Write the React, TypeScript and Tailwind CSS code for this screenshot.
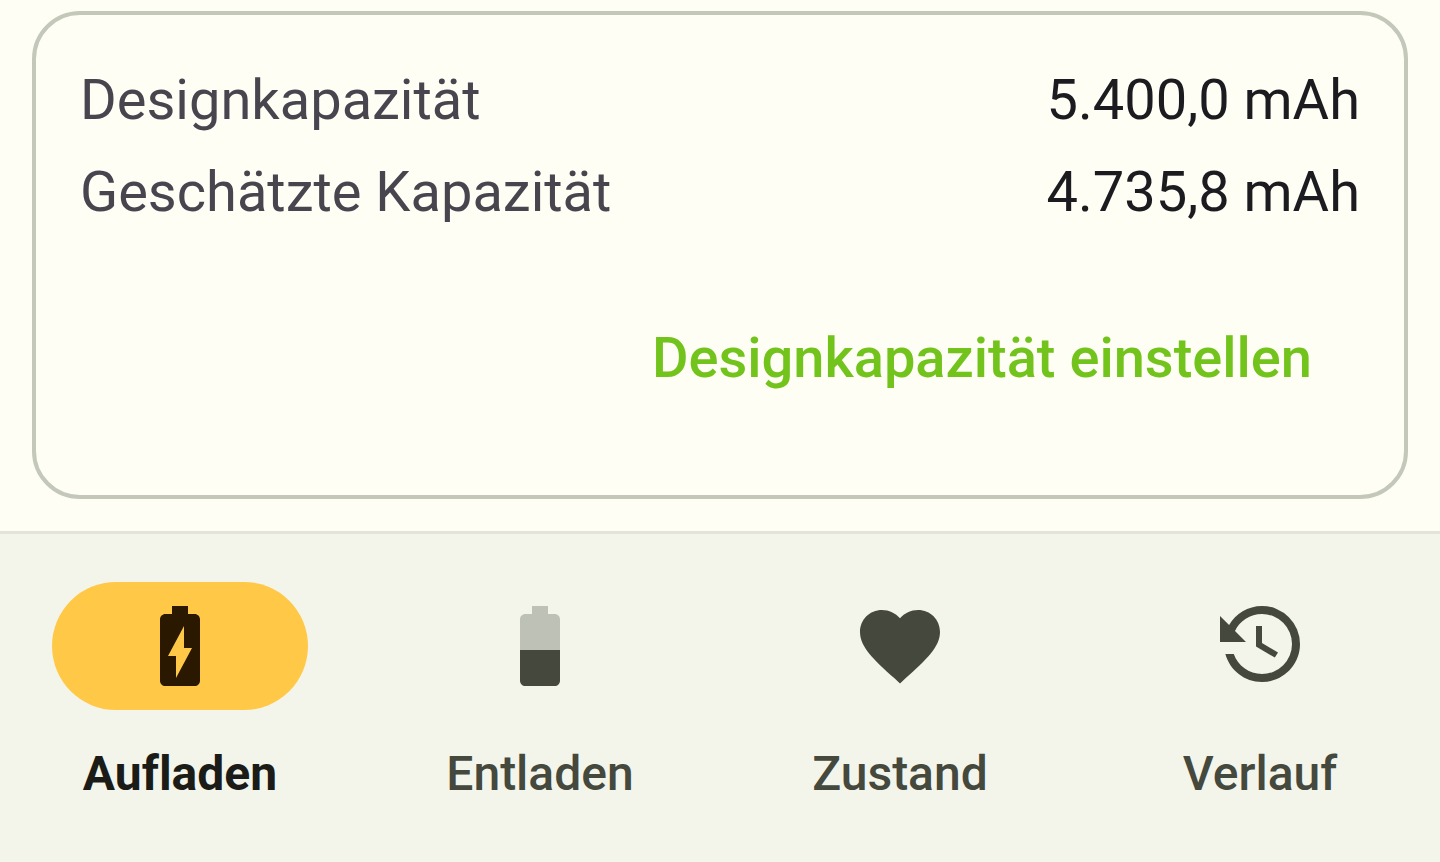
import type { ReactNode } from "react";

const capacities = [
  { label: "Designkapazität", value: "5.400,0 mAh" },
  { label: "Geschätzte Kapazität", value: "4.735,8 mAh" },
];

function Icon({ children }: { children: ReactNode }) {
  return (
    <svg viewBox="0 0 24 24" className="size-24" fill="currentColor" aria-hidden="true">
      {children}
    </svg>
  );
}

const tabs = [
  {
    label: "Aufladen",
    active: true,
    icon: (
      <path d="M15.67 4H14V2h-4v2H8.33C7.6 4 7 4.6 7 5.33v15.33C7 21.4 7.6 22 8.33 22h7.33c.74 0 1.34-.6 1.34-1.33V5.33C17 4.6 16.4 4 15.67 4zM11 20v-5.5H9L13 7v5.5h2L11 20z" />
    ),
  },
  {
    label: "Entladen",
    active: false,
    icon: (
      <>
        <path fillOpacity=".3" d="M17 5.33C17 4.6 16.4 4 15.67 4H14V2h-4v2H8.33C7.6 4 7 4.6 7 5.33V13h10V5.33z" />
        <path d="M7 13v7.67C7 21.4 7.6 22 8.33 22h7.33c.74 0 1.34-.6 1.34-1.33V13H7z" />
      </>
    ),
  },
  {
    label: "Zustand",
    active: false,
    icon: (
      <path d="M12 21.35L10.55 20.03C5.4 15.36 2 12.27 2 8.5C2 5.41 4.42 3 7.5 3C9.24 3 10.91 3.81 12 5.08C13.09 3.81 14.76 3 16.5 3C19.58 3 22 5.41 22 8.5C22 12.27 18.6 15.36 13.45 20.03L12 21.35Z" />
    ),
  },
  {
    label: "Verlauf",
    active: false,
    icon: (
      <path d="M11 7V12.11L15.71 14.9L16.5 13.62L12.5 11.25V7M12.5 2C8.97 2 5.91 3.92 4.27 6.77L2 4.5V11H8.5L5.75 8.25C6.96 5.73 9.5 4 12.5 4A7.5 7.5 0 0 1 20 11.5A7.5 7.5 0 0 1 12.5 19C9.23 19 6.47 16.91 5.44 14H3.34C4.44 18.03 8.11 21 12.5 21C17.74 21 22 16.75 22 11.5A9.5 9.5 0 0 0 12.5 2Z" />
    ),
  },
];

export default function App() {
  return (
    <div className="flex min-h-screen flex-col bg-[#fefef5] font-['Roboto',sans-serif]">
      <main className="grow px-8 pt-[11px] pb-8">
        <section className="flex flex-col rounded-[48px] border-4 border-[#c4c8ba] px-11 pt-[45px] pb-[57px]">
          <dl className="flex flex-col gap-3 text-[56px] leading-20">
            {capacities.map((row) => (
              <div key={row.label} className="flex justify-between gap-8">
                <dt className="text-[#49454f]">{row.label}</dt>
                <dd className="text-[#1c1b1f]">{row.value}</dd>
              </div>
            ))}
          </dl>
          <button
            type="button"
            className="mt-[46px] cursor-pointer self-end rounded-full px-12 py-10 text-[56px] leading-20 font-medium text-[#72c41c]"
          >
            Designkapazität einstellen
          </button>
        </section>
      </main>
      <nav className="grid grid-cols-4 border-t-3 border-[#e3e3dc] bg-[#f3f5eb] pt-12 pb-14 [font-variant-ligatures:none]">
        {tabs.map((tab) => (
          <a
            key={tab.label}
            href={`#${tab.label.toLowerCase()}`}
            aria-current={tab.active ? "page" : undefined}
            className="flex flex-col items-center gap-8"
          >
            <span
              className={
                tab.active
                  ? "flex h-32 w-64 items-center justify-center rounded-full bg-[#ffc947] text-[#2a1800]"
                  : "flex h-32 w-64 items-center justify-center rounded-full text-[#45483d]"
              }
            >
              <Icon>{tab.icon}</Icon>
            </span>
            <span
              className={
                tab.active
                  ? "text-5xl leading-16 font-bold text-[#1b1c18]"
                  : "text-5xl leading-16 font-medium text-[#45483d]"
              }
            >
              {tab.label}
            </span>
          </a>
        ))}
      </nav>
    </div>
  );
}
